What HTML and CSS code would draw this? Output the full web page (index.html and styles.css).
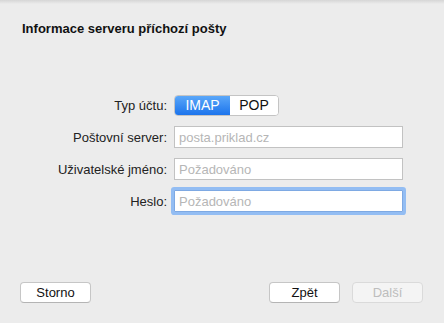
FILE: index.html
```html
<html lang="cs">
  <head>
    <meta charset="UTF-8" />
    <meta name="viewport" content="width=device-width, initial-scale=1.0" />
    <title>Informace serveru příchozí pošty</title>
    <link rel="stylesheet" href="styles.css">
  </head>
  <body>
    <div class="sheet">
      <h1>Informace serveru příchozí pošty</h1>

      <form class="server-form">
        <label>Typ účtu:</label>
        <div class="segmented">
          <button type="button" class="seg active">IMAP</button>
          <button type="button" class="seg">POP</button>
        </div>

        <label for="server">Poštovní server:</label>
        <input id="server" type="text" placeholder="posta.priklad.cz" />

        <label for="user">Uživatelské jméno:</label>
        <input id="user" type="text" placeholder="Požadováno" />

        <label for="pass">Heslo:</label>
        <input id="pass" type="password" class="focused" placeholder="Požadováno" />
      </form>

      <div class="actions">
        <button class="btn">Storno</button>
        <div class="right">
          <button class="btn">Zpět</button>
          <button class="btn" disabled>Další</button>
        </div>
      </div>
    </div>
  </body>
</html>
```

FILE: styles.css
```css
body {
  margin: 0;
  background: #ececec;
}
body,
button,
input {
  font-family: "Liberation Sans", Arial, sans-serif;
  font-size: 13px;
  color: #1a1a1a;
}
.sheet {
  height: 323px;
  box-sizing: border-box;
  padding: 21px 21px 0 20px;
  background: linear-gradient(#d6d6d6, #ececec 4px);
  display: flex;
  flex-direction: column;
}
h1 {
  margin: 0 0 0 2px;
  font-size: 13px;
  font-weight: bold;
  line-height: 16px;
  color: #111;
}
.server-form {
  display: grid;
  grid-template-columns: 147px 229px;
  grid-auto-rows: 22px;
  column-gap: 7px;
  row-gap: 10px;
  align-items: center;
  margin-top: 57px;
}
.server-form label {
  text-align: right;
  color: #222;
}
.segmented {
  display: flex;
  width: 105px;
  height: 21px;
  border: 1px solid #c4c4c4;
  border-radius: 4px;
  box-sizing: border-box;
  background: #fff;
  overflow: hidden;
}
.seg {
  border: 0;
  padding: 0;
  margin: 0;
  background: #fff;
  font-size: 14px;
  color: #111;
  cursor: pointer;
}
.seg:first-child {
  width: 55px;
}
.seg:last-child {
  flex: 1;
}
.seg.active {
  background: linear-gradient(#5aa7f9, #1c74ec);
  color: #fff;
}
input {
  height: 22px;
  box-sizing: border-box;
  border: 1px solid #c2c2c2;
  background: #fff;
  padding: 0 4px;
  outline: none;
}
input::placeholder {
  color: #b6b6b6;
}
input.focused {
  border-color: #7ea9e3;
  box-shadow: 0 0 0 3px #93bdf3;
  border-radius: 1px;
}
.actions {
  margin-top: auto;
  margin-bottom: 20px;
  display: flex;
  justify-content: space-between;
}
.actions .right {
  display: flex;
  gap: 12px;
}
.btn {
  width: 71px;
  height: 21px;
  padding: 0;
  background: #fff;
  border: 1px solid #c6c6c6;
  border-bottom-color: #b4b4b4;
  border-radius: 4px;
  color: #111;
}
.btn:disabled {
  background: #f4f4f4;
  border-color: #dadada;
  color: #bdbdbd;
}
```
